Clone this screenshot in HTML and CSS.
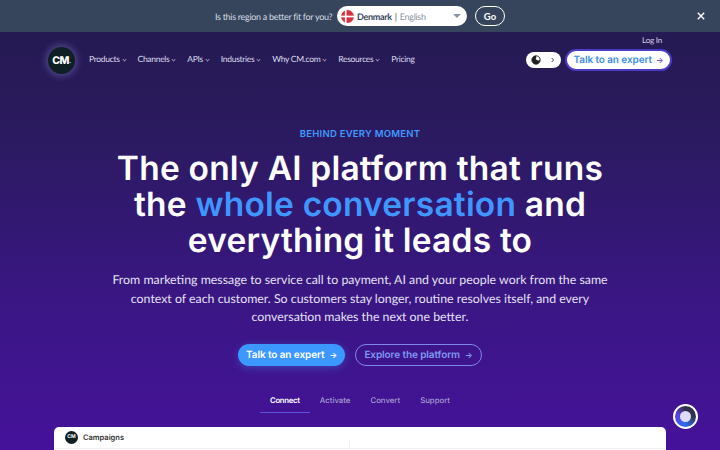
FILE: index.html
```html
<!DOCTYPE html>
<html lang="en">
<head>
    <meta charset="UTF-8">
    <meta name="viewport" content="width=device-width, initial-scale=1.0">
    <title>CM.com</title>
    <link rel="stylesheet" href="styles.css">
</head>
<body>
    <div class="region-bar">
        <span class="region-question">Is this region a better fit for you?</span>
        <div class="region-select">
            <svg class="flag" viewBox="0 0 20 20" width="13" height="13">
                <circle cx="10" cy="10" r="10" fill="#d8303f"/>
                <rect x="6" y="0" width="2.6" height="20" fill="#fff"/>
                <rect x="0" y="8.7" width="20" height="2.6" fill="#fff"/>
            </svg>
            <span class="region-country">Denmark</span>
            <span class="region-sep">|</span>
            <span class="region-lang">English</span>
            <span class="region-caret"></span>
        </div>
        <button class="region-go">Go</button>
        <svg class="region-close" viewBox="0 0 10 10" width="8" height="8">
            <path d="M1 1L9 9M9 1L1 9" stroke="#fff" stroke-width="1.7"/>
        </svg>
    </div>

    <div class="hero">
        <header class="site-header">
            <div class="login-row"><a class="login">Log In</a></div>
            <div class="nav-row">
                <div class="logo"><span class="logo-text">CM</span><span class="logo-dot"></span></div>
                <nav class="nav">
                    <a class="nav-link">Products <i class="chev"></i></a>
                    <a class="nav-link">Channels <i class="chev"></i></a>
                    <a class="nav-link">APIs <i class="chev"></i></a>
                    <a class="nav-link">Industries <i class="chev"></i></a>
                    <a class="nav-link">Why CM.com <i class="chev"></i></a>
                    <a class="nav-link">Resources <i class="chev"></i></a>
                    <a class="nav-link">Pricing</a>
                </nav>
                <div class="lang-toggle">
                    <svg viewBox="0 0 12 12" width="10" height="10">
                        <circle cx="6" cy="6" r="5" fill="#222" stroke="#222"/>
                        <path d="M6 1.5a4.5 4.5 0 0 1 4.4 4.5c-1 .8-2 .9-2.6.2-.5-.6-1.700-.4-2-1.200-.3-.9.6-1.200.6-2 0-.6-.2-1-.4-1.500z" fill="#fff"/>
                    </svg>
                    <svg viewBox="0 0 6 8" width="4" height="6">
                        <path d="M1 1l3 3-3 3" fill="none" stroke="#222" stroke-width="1.300"/>
                    </svg>
                </div>
                <a class="header-cta">Talk to an expert <span class="arrow">→</span></a>
            </div>
        </header>

        <main class="hero-body">
            <p class="eyebrow">BEHIND EVERY MOMENT</p>
            <h1 class="headline">The only AI platform that runs<br>the <span class="accent">whole conversation</span> and<br>everything it leads to</h1>
            <p class="lead">From marketing message to service call to payment, AI and your people work from the same context of each customer. So customers stay longer, routine resolves itself, and every conversation makes the next one better.</p>
            <div class="hero-buttons">
                <a class="btn btn-primary">Talk to an expert <span class="arrow">→</span></a>
                <a class="btn btn-outline">Explore the platform <span class="arrow">→</span></a>
            </div>
            <div class="tabs">
                <a class="tab active">Connect</a>
                <a class="tab">Activate</a>
                <a class="tab">Convert</a>
                <a class="tab">Support</a>
            </div>
            <div class="preview">
                <div class="preview-head">
                    <div class="preview-logo">CM</div>
                    <span class="preview-title">Campaigns</span>
                    <span class="preview-rule"></span>
                </div>
            </div>
        </main>

        <div class="chat-bubble"><span class="chat-dot"></span></div>
    </div>
</body>
</html>
```

FILE: styles.css
```css
* {
    box-sizing: border-box;
}
html, body {
    margin: 0;
    height: 450px;
    overflow: hidden;
}
body {
    font-family: "Inter", "Liberation Sans", sans-serif;
    text-rendering: geometricPrecision;
    background: #2a1a5c;
    color: #fff;
}

/* region bar */
.region-bar {
    height: 32px;
    background: #36455c;
    display: flex;
    align-items: center;
    padding-left: 215px;
    position: relative;
}
.region-question {
    font-family: "Lato", sans-serif;
    font-size: 9px;
    letter-spacing: -.3px;
    color: #d5dbe5;
    width: 122px;
    white-space: nowrap;
}
.region-select {
    width: 130px;
    height: 20px;
    background: #fff;
    border-radius: 10px;
    display: flex;
    align-items: center;
    padding-left: 4px;
    font-family: "Lato", sans-serif;
    font-size: 9px;
    letter-spacing: -.3px;
    position: relative;
}
.flag {
    margin-right: 3px;
}
.region-country {
    color: #36455c;
    font-weight: 700;
}
.region-sep {
    color: #36455c;
    margin: 0 3px;
}
.region-lang {
    color: #8b94a3;
}
.region-caret {
    position: absolute;
    right: 6px;
    top: 8px;
    border-left: 4px solid transparent;
    border-right: 4px solid transparent;
    border-top: 4px solid #8b94a3;
}
.region-go {
    margin-left: 8px;
    width: 30px;
    height: 20px;
    border: 1px solid #fff;
    border-radius: 10px;
    background: transparent;
    color: #fff;
    font-family: "Lato", sans-serif;
    font-size: 9.5px;
    font-weight: 700;
    padding: 0;
}
.region-close {
    position: absolute;
    right: 15px;
    top: 12px;
}

/* hero */
.hero {
    height: 418px;
    position: relative;
    overflow: hidden;
    background: linear-gradient(180deg, #251a52 0%, #2b1a60 25%, #3a1684 65%, #45129a 100%);
}

/* header */
.site-header {
    height: 56px;
    padding: 0 48px;
}
.login-row {
    display: flex;
    justify-content: flex-end;
    height: 15px;
    padding: 3px 10px 0 0;
}
.login {
    font-family: "Lato", sans-serif;
    font-size: 8px;
    letter-spacing: -.2px;
    color: #d7d5e6;
}
.nav-row {
    display: flex;
    align-items: center;
    height: 26px;
}
.logo {
    width: 27px;
    height: 27px;
    margin-right: 14px;
    border-radius: 50%;
    background: #0f1f24;
    box-shadow: 0 0 7px 2px rgba(130, 130, 210, .45);
    display: flex;
    align-items: center;
    justify-content: center;
    flex-shrink: 0;
}
.logo-text {
    font-size: 10.5px;
    font-weight: 800;
    letter-spacing: -.5px;
}
.logo-dot {
    width: 1.5px;
    height: 1.5px;
    margin: 5px 0 0 .5px;
    background: #3c9bff;
}
.nav {
    display: flex;
    gap: 12px;
    margin-top: -2px;
}
.nav-link {
    font-family: "Lato", sans-serif;
    font-size: 8.5px;
    letter-spacing: -.3px;
    color: #dcdaeb;
    white-space: nowrap;
}
.chev {
    display: inline-block;
    width: 3px;
    height: 3px;
    margin: 0 0 1.5px 1px;
    border-right: 1px solid #8f8ab0;
    border-bottom: 1px solid #8f8ab0;
    transform: rotate(45deg);
}
.lang-toggle {
    width: 35px;
    height: 16px;
    margin-left: auto;
    background: #fff;
    border-radius: 8px;
    display: flex;
    align-items: center;
    justify-content: space-between;
    padding: 0 6px 0 5px;
}
.header-cta {
    margin-left: 4px;
    width: 107px;
    height: 22px;
    background: #fff;
    border: 2px solid #4b3bc7;
    border-radius: 11px;
    color: #3c8ee6;
    font-size: 10px;
    font-weight: 600;
    letter-spacing: -.1px;
    display: flex;
    align-items: center;
    justify-content: center;
    gap: 4px;
    white-space: nowrap;
}
.header-cta .arrow {
    color: #7b5cc9;
    font-size: 8px;
}

/* hero content */
.hero-body {
    display: flex;
    flex-direction: column;
    align-items: center;
}
.eyebrow {
    margin: 41px 0 0;
    font-size: 9.5px;
    font-weight: 600;
    letter-spacing: .25px;
    line-height: 12px;
    color: #3f9bff;
}
.headline {
    margin: 10px 0 0;
    font-size: 33.5px;
    font-weight: 600;
    line-height: 36px;
    text-align: center;
    letter-spacing: .2px;
}
.accent {
    color: #3f96ff;
}
.lead {
    width: 520px;
    margin: 12px 0 0;
    font-family: "Lato", sans-serif;
    font-size: 12.35px;
    line-height: 18.5px;
    text-align: center;
    color: #e4e0f2;
}
.hero-buttons {
    display: flex;
    gap: 10px;
    margin-top: 17px;
}
.btn {
    height: 22px;
    border-radius: 11px;
    font-size: 10px;
    font-weight: 600;
    letter-spacing: -.1px;
    display: flex;
    align-items: center;
    justify-content: center;
    gap: 5px;
    white-space: nowrap;
}
.btn .arrow {
    font-size: 8px;
}
.btn-primary {
    width: 107px;
    background: #3c98ff;
    color: #fff;
    box-shadow: 0 2px 8px rgba(60, 152, 255, .35);
}
.btn-outline {
    width: 127px;
    border: 1px solid #7e88ea;
    color: #7f9af2;
}
.tabs {
    display: flex;
    margin-top: 21px;
    height: 26px;
}
.tab {
    padding: 8px 10px 0;
    font-size: 7.8px;
    font-weight: 500;
    color: #a49dcf;
    height: 26px;
    white-space: nowrap;
}
.tab.active {
    color: #fff;
    font-weight: 600;
    letter-spacing: -.3px;
    border-bottom: 1.5px solid #5a54e0;
}
.preview {
    width: 612px;
    height: 60px;
    margin-top: 14px;
    background: #fff;
    border-radius: 5px 5px 0 0;
}
.preview-head {
    display: flex;
    align-items: center;
    height: 22px;
    padding-left: 11px;
    border-bottom: 1px solid #f2f2f4;
}
.preview-logo {
    width: 13px;
    height: 13px;
    margin-right: 5px;
    border-radius: 50%;
    background: #0f1f24;
    color: #fff;
    font-size: 5px;
    font-weight: 700;
    display: flex;
    align-items: center;
    justify-content: center;
}
.preview-title {
    width: 266px;
    font-size: 7.5px;
    font-weight: 600;
    color: #333;
}
.preview-rule {
    width: 1px;
    height: 9px;
    align-self: flex-end;
    background: #f2f2f4;
}

/* chat launcher */
.chat-bubble {
    position: absolute;
    left: 673px;
    top: 372px;
    width: 25px;
    height: 25px;
    border-radius: 50%;
    border: 2px solid #fff;
    background: conic-gradient(#30304a 0deg, #30304a 90deg, #2f6df0 180deg, #5a3fe0 280deg, #30304a 360deg);
    display: flex;
    align-items: center;
    justify-content: center;
}
.chat-dot {
    width: 11px;
    height: 11px;
    border-radius: 50%;
    background: #dcdcf8;
}
```
